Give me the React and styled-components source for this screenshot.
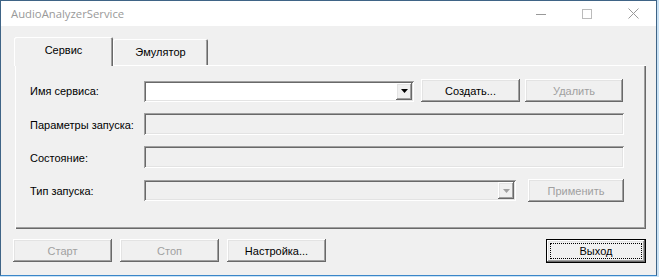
import React from "react";
import styled, { createGlobalStyle, css } from "styled-components";

const GlobalStyle = createGlobalStyle`
  html, body { margin: 0; padding: 0; background: #c9e2f5; }
  body { font-family: "Liberation Sans", Arial, sans-serif; font-size: 11px; color: #000; }
`;

const raised = css`
  background: #f0f0f0;
  box-shadow: inset -1px -1px #696969, inset 1px 1px #ffffff, inset -2px -2px #a0a0a0, inset 2px 2px #e3e3e3;
`;

const sunken = css`
  box-shadow: inset 1px 1px #a0a0a0, inset -1px -1px #ffffff, inset 2px 2px #696969, inset -2px -2px #e3e3e3;
`;

const Window = styled.div`
  width: 655px;
  height: 274px;
  border: 1px solid #3f6486;
  border-bottom-color: #3a86c8;
  background: #f0f0f0;
  display: flex;
  flex-direction: column;
`;

const TitleBar = styled.div`
  height: 25px;
  background: #fff;
  display: flex;
  align-items: center;
  padding-left: 10px;
`;

const Title = styled.div`
  flex: 1;
  font-family: "Open Sans", "Noto Sans", sans-serif;
  font-size: 11.3px;
  color: #999;
`;

const CaptionButton = styled.div`
  width: 46px;
  height: 25px;
  display: flex;
  align-items: center;
  justify-content: center;
`;

const Client = styled.div`
  flex: 1;
  padding: 11px 10px 0 12px;
  display: flex;
  flex-direction: column;
`;

const TabStrip = styled.div`
  height: 28px;
  margin-left: 1px;
  display: flex;
  align-items: flex-end;
`;

const Tab = styled.div`
  position: relative;
  z-index: ${(p) => (p.$active ? 2 : 1)};
  width: ${(p) => p.$w}px;
  height: ${(p) => (p.$active ? 29 : 26)}px;
  margin-bottom: ${(p) => (p.$active ? -1 : 0)}px;
  background: #f0f0f0;
  border-radius: 2px 2px 0 0;
  box-shadow: inset 1px 1px #ffffff, inset -1px 0 #696969, inset -2px 0 #a0a0a0;
  display: flex;
  align-items: center;
  justify-content: center;
  padding-bottom: ${(p) => (p.$active ? 3 : 0)}px;
  box-sizing: border-box;
`;

const Panel = styled.div`
  margin-left: 2px;
  width: 631px;
  height: 164px;
  box-sizing: border-box;
  box-shadow: inset 1px 1px #ffffff, inset -1px -1px #696969, inset -2px -2px #a0a0a0;
  padding: 14px 0 0 15px;
  display: flex;
  flex-direction: column;
  gap: 10px;
`;

const Row = styled.div`
  height: ${(p) => p.$h || 23}px;
  display: flex;
  align-items: center;
`;

const Label = styled.div`
  width: 114px;
  flex: none;
`;

const Field = styled.div`
  width: ${(p) => p.$w}px;
  height: ${(p) => p.$h}px;
  flex: none;
  box-sizing: border-box;
  background: ${(p) => (p.$disabled ? "#f0f0f0" : "#fff")};
  ${sunken};
  display: flex;
  justify-content: flex-end;
  align-items: stretch;
  padding: 2px;
  align-self: ${(p) => (p.$top ? "flex-start" : "center")};
`;

const DropButton = styled.div`
  width: 16px;
  ${raised};
  display: flex;
  align-items: center;
  justify-content: center;
`;

const Button = styled.div`
  width: ${(p) => p.$w}px;
  height: 23px;
  flex: none;
  margin-left: ${(p) => p.$ml || 0}px;
  box-sizing: border-box;
  ${raised};
  display: flex;
  align-items: center;
  justify-content: center;
  color: ${(p) => (p.$disabled ? "#a0a0a0" : "#000")};
  align-self: flex-start;
`;

const DefaultButton = styled.div`
  width: 100px;
  height: 24px;
  box-sizing: border-box;
  border: 1px solid #000;
  ${raised};
  display: flex;
  padding: 3px;
`;

const FocusRect = styled.div`
  flex: 1;
  border: 1px dotted #000;
  display: flex;
  align-items: center;
  justify-content: center;
`;

const BottomBar = styled.div`
  margin-top: 10px;
  display: flex;
  align-items: flex-start;
  gap: 8px;
`;

const Spacer = styled.div`
  flex: 1;
`;

const Arrow = ({ disabled }) => (
  <svg width="7" height="4" viewBox="0 0 7 4">
    <polygon points="0,0 7,0 3.5,4" fill={disabled ? "#a0a0a0" : "#000"} />
  </svg>
);

export default function App() {
  return (
    <>
      <GlobalStyle />
      <Window>
        <TitleBar>
          <Title>AudioAnalyzerService</Title>
          <CaptionButton>
            <svg width="10" height="10" viewBox="0 0 10 10">
              <line x1="0" y1="5.5" x2="10" y2="5.5" stroke="#999" strokeWidth="1" />
            </svg>
          </CaptionButton>
          <CaptionButton>
            <svg width="10" height="10" viewBox="0 0 10 10">
              <rect x="0.5" y="0.5" width="9" height="9" fill="none" stroke="#bbb" strokeWidth="1" />
            </svg>
          </CaptionButton>
          <CaptionButton>
            <svg width="11" height="11" viewBox="0 0 11 11">
              <line x1="0.5" y1="0.5" x2="10.5" y2="10.5" stroke="#999" strokeWidth="1" />
              <line x1="10.5" y1="0.5" x2="0.5" y2="10.5" stroke="#999" strokeWidth="1" />
            </svg>
          </CaptionButton>
        </TitleBar>
        <Client>
          <TabStrip>
            <Tab $active $w={99}>Сервис</Tab>
            <Tab $w={95}>Эмулятор</Tab>
          </TabStrip>
          <Panel>
            <Row $h={24}>
              <Label>Имя сервиса:</Label>
              <Field $w={270} $h={21}>
                <DropButton>
                  <Arrow />
                </DropButton>
              </Field>
              <Button $w={99} $ml={7}>Создать...</Button>
              <Button $w={98} $ml={5} $disabled>Удалить</Button>
            </Row>
            <Row>
              <Label>Параметры запуска:</Label>
              <Field $w={480} $h={22} $disabled $top />
            </Row>
            <Row>
              <Label>Состояние:</Label>
              <Field $w={480} $h={22} $disabled $top />
            </Row>
            <Row>
              <Label>Тип запуска:</Label>
              <Field $w={372} $h={21} $disabled>
                <DropButton>
                  <Arrow disabled />
                </DropButton>
              </Field>
              <Button $w={96} $ml={12} $disabled>Применить</Button>
            </Row>
          </Panel>
          <BottomBar>
            <Button $w={99} $disabled>Старт</Button>
            <Button $w={99} $disabled>Стоп</Button>
            <Button $w={99}>Настройка...</Button>
            <Spacer />
            <DefaultButton>
              <FocusRect>Выход</FocusRect>
            </DefaultButton>
          </BottomBar>
        </Client>
      </Window>
    </>
  );
}
